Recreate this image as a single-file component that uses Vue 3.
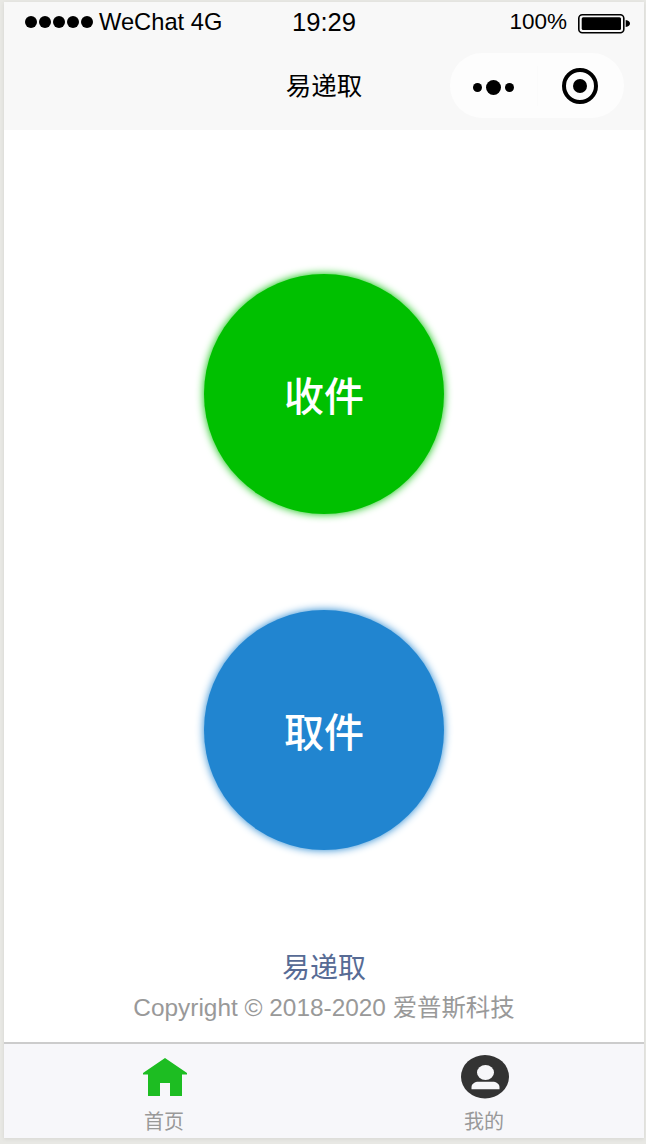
<script setup>
const actions = [
  { label: '收件', tone: 'green' },
  { label: '取件', tone: 'blue' },
]
</script>

<template>
  <div class="window">
    <header class="top">
      <div class="status">
        <div class="carrier">
          <span class="signal"><i v-for="n in 5" :key="n"></i></span>
          <span>WeChat 4G</span>
        </div>
        <div class="time">19:29</div>
        <div class="power">
          <span>100%</span>
          <svg class="battery" width="52" height="20" viewBox="0 0 52 20">
            <rect x=".8" y=".8" width="45" height="18" rx="3.5" fill="none" stroke="#000" stroke-width="1.6"/>
            <rect x="3.700" y="3.300" width="39.300" height="12.700" rx="1.500" fill="#000"/>
            <path d="M47.700 6c2.800.4 4.300 1.800 4.300 3.500s-1.500 3.100-4.300 3.500z" fill="#000"/>
          </svg>
        </div>
      </div>
      <div class="nav">
        <div class="title">易递取</div>
        <div class="capsule">
          <div class="more"><i></i><i class="big"></i><i></i></div>
          <span class="divider"></span>
          <svg class="target" width="38" height="38" viewBox="0 0 38 38">
            <circle cx="19" cy="19" r="16" fill="none" stroke="#000" stroke-width="4"/>
            <circle cx="19" cy="19" r="7" fill="#000"/>
          </svg>
        </div>
      </div>
    </header>

    <main class="content">
      <div class="actions">
        <button v-for="a in actions" :key="a.label" class="circle" :class="a.tone">{{ a.label }}</button>
      </div>
      <footer class="foot">
        <div class="brand">易递取</div>
        <div class="copy">Copyright © 2018-2020 爱普斯科技</div>
      </footer>
    </main>

    <nav class="tabs">
      <div class="tab">
        <svg width="48" height="44" viewBox="0 0 48 44">
          <path d="M24 3 46 18V19.500H41V41H29V28H19V41H7V19.500H2V18Z" fill="#1dbd22"/>
        </svg>
        <span>首页</span>
      </div>
      <div class="tab">
        <svg width="48" height="44" viewBox="0 0 48 44">
          <ellipse cx="24" cy="21.700" rx="24" ry="21.700" fill="#333"/>
          <ellipse cx="24.500" cy="17.500" rx="8.500" ry="7.500" fill="#f7f7fa"/>
          <path d="M10.500 34.300V32c0-3.300 3.500-5.300 7-5.300h14c3.500 0 7 2 7 5.300v2.300z" fill="#f7f7fa"/>
        </svg>
        <span>我的</span>
      </div>
    </nav>
  </div>
</template>

<style scoped>
.window {
  width: 640px;
  height: 1136px;
  margin: 2px 2px 6px 4px;
  display: flex;
  flex-direction: column;
  background: #fff;
  font-family: "Liberation Sans", "Noto Sans CJK SC", sans-serif;
  color: #000;
  box-shadow: 0 1px 4px rgba(0, 0, 0, 0.08);
}
.top {
  height: 128px;
  flex: none;
  background: #f8f8f8;
}
.status {
  height: 40px;
  display: grid;
  grid-template-columns: 1fr 1fr 1fr;
  align-items: center;
  padding: 0 14px 0 21px;
  box-sizing: border-box;
  font-size: 22.500px;
}
.carrier { display: flex; align-items: center; gap: 6px; white-space: nowrap; font-size: 23.700px; }
.signal { display: flex; gap: 2px; }
.signal i { width: 12px; height: 12px; border-radius: 50%; background: #000; }
.time { font-size: 25.600px; text-align: center; margin-left: -7px; }
.power { display: flex; justify-content: flex-end; align-items: center; gap: 11px; }
.battery { margin-top: 3px; }
.nav {
  height: 88px;
  display: flex;
  align-items: center;
  justify-content: center;
  position: relative;
}
.title { font-size: 25.500px; margin-bottom: 6px; }
.capsule {
  position: absolute;
  right: 20px;
  top: 11px;
  width: 174px;
  height: 65px;
  border-radius: 33px;
  background: #fdfdfd;
  display: flex;
  align-items: center;
  justify-content: space-between;
  box-sizing: border-box;
  padding: 0 25px 0 23px;
}
.more { display: flex; align-items: center; gap: 4px; margin-top: 3px; }
.more i { width: 9px; height: 9px; border-radius: 50%; background: #000; }
.more i.big { width: 15px; height: 15px; }
.divider { width: 1px; height: 40px; background: #fbfbfb; }
.content {
  flex: 1;
  display: flex;
  flex-direction: column;
  align-items: center;
  justify-content: space-between;
  padding: 144px 0 14px;
}
.actions { display: flex; flex-direction: column; gap: 96px; }
.circle {
  width: 240px;
  height: 240px;
  border: 0;
  padding: 0;
  border-radius: 50%;
  color: #fff;
  font: 500 40px "Liberation Sans", "Noto Sans CJK SC", sans-serif;
}
.green { background: #00c000; box-shadow: 0 0 8px #00c000; }
.blue { background: #2185d0; box-shadow: 0 0 8px #2185d0; }
.foot { text-align: center; }
.brand { font-size: 28px; line-height: 38px; color: #576b95; }
.copy { font-size: 24.400px; line-height: 40px; color: #999; }
.tabs {
  height: 96px;
  flex: none;
  box-sizing: border-box;
  border-top: 2px solid #ccc;
  background: #f7f7fa;
  display: grid;
  grid-template-columns: 1fr 1fr;
}
.tab {
  display: flex;
  flex-direction: column;
  align-items: center;
  color: #999;
  font-size: 20px;
  position: relative;
  padding-top: 11px;
}
.tab svg { display: block; margin-left: 2px; }
.tab span { position: absolute; top: 63px; line-height: 30px; }
</style>

<style>
html, body { background: #e8e8e4; }
</style>
